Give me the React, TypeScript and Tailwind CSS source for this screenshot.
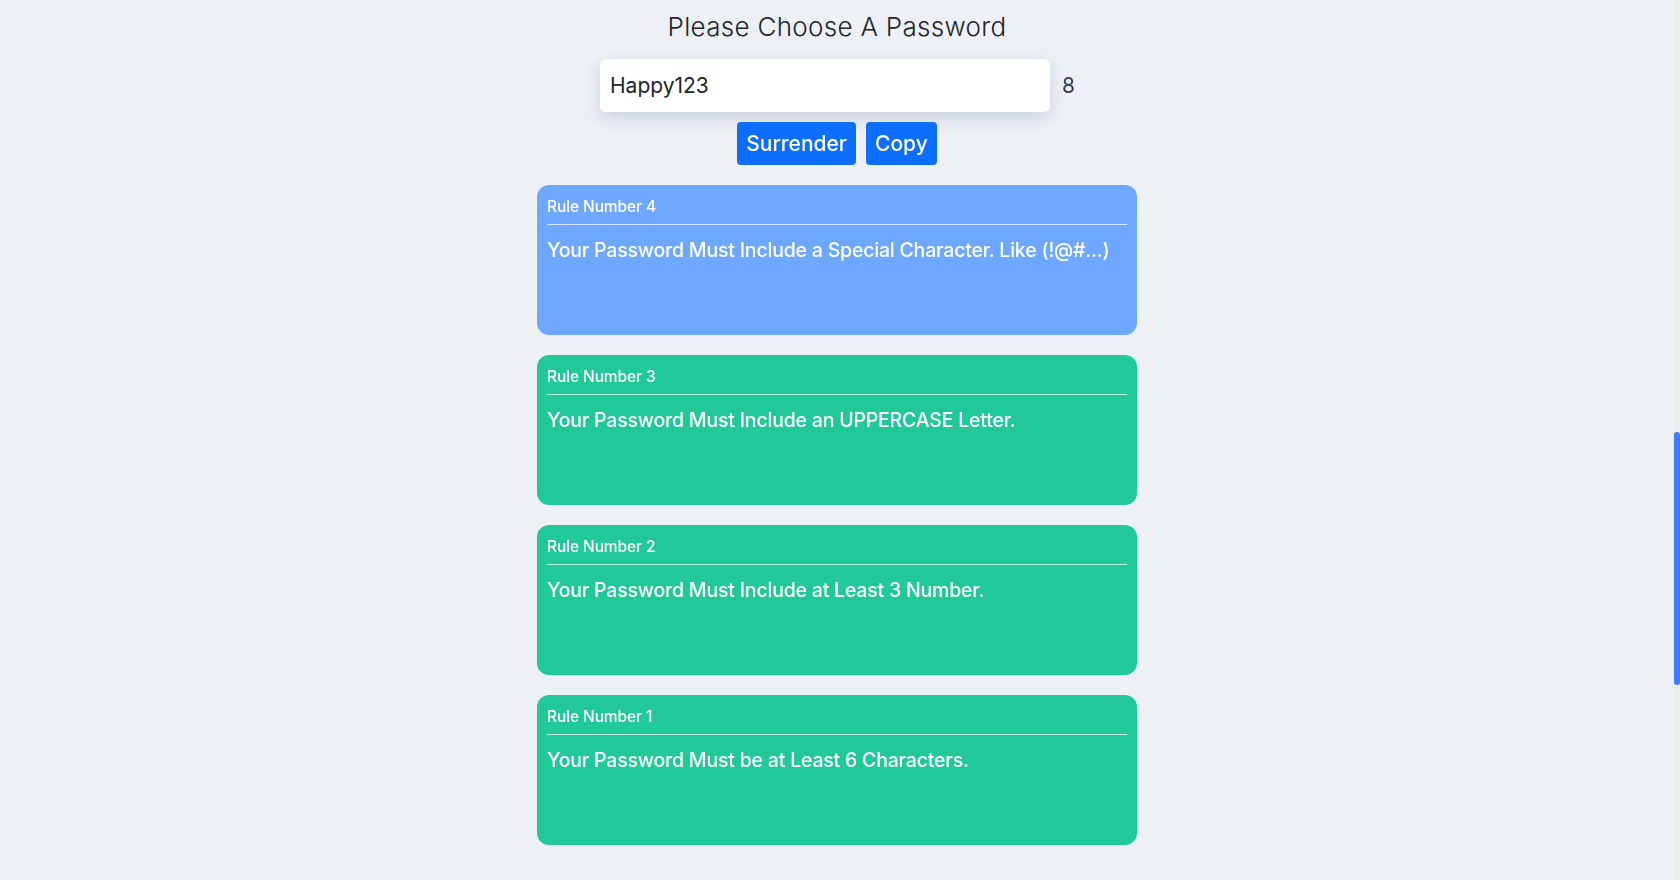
import { useState } from "react";

type Rule = {
  id: number;
  text: string;
  passed: boolean;
};

const rules: Rule[] = [
  { id: 4, text: "Your Password Must Include a Special Character. Like (!@#...)", passed: false },
  { id: 3, text: "Your Password Must Include an UPPERCASE Letter.", passed: true },
  { id: 2, text: "Your Password Must Include at Least 3 Number.", passed: true },
  { id: 1, text: "Your Password Must be at Least 6 Characters.", passed: true },
];

export default function App() {
  const [password, setPassword] = useState<string>("Happy123");

  return (
    <div className="flex h-[880px] w-full overflow-hidden bg-[#edf1f5] font-['Inter',sans-serif] text-[#212529]">
      <div className="flex flex-1 flex-col items-center">
        <h1 className="mt-[12px] text-[26px] leading-[30px] font-light tracking-[0.3px]">
          Please Choose A Password
        </h1>

        <div className="mt-[17px] flex items-center gap-[12px]">
          <input
            autoFocus
            value={password}
            onChange={(e) => setPassword(e.target.value)}
            className="h-[53px] w-[450px] rounded-[6px] bg-white px-[10px] text-[21px] text-[#212529] caret-[#212529] shadow-[0_6px_18px_rgba(100,120,150,0.25)] outline-none"
          />
          <span className="w-[12px] text-[21px] text-[#2c3e50]">{password.length}</span>
        </div>

        <div className="mt-[10px] flex gap-[10px]">
          <button className="h-[43px] rounded-[4px] bg-[#0d6efd] px-[9px] text-[21px] font-medium text-white">
            Surrender
          </button>
          <button className="h-[43px] rounded-[4px] bg-[#0d6efd] px-[9px] text-[21px] font-medium text-white">
            Copy
          </button>
        </div>

        <div className="mt-[20px] flex flex-col gap-[20px]">
          {rules.map((rule) => (
            <div
              key={rule.id}
              className={
                rule.passed
                  ? "h-[150px] w-[600px] rounded-[12px] bg-[#20c997] px-[10px] pt-[12px] text-white"
                  : "h-[150px] w-[600px] rounded-[12px] bg-[#6ea8fe] px-[10px] pt-[12px] text-white"
              }
            >
              <div className="text-[15.5px] leading-[20px] font-medium tracking-[-0.1px]">Rule Number {rule.id}</div>
              <div className="mt-[7px] border-t border-white/70" />
              <div className="mt-[12px] text-[19.5px] leading-[26px] font-medium tracking-[-0.2px]">{rule.text}</div>
            </div>
          ))}
        </div>
      </div>

      {/* scrollbar */}
      <div className="flex w-[6px] flex-col bg-[#ebebeb] pt-[432px]">
        <div className="h-[253px] w-[6px] rounded-full bg-[#3f7cff]" />
      </div>
    </div>
  );
}
